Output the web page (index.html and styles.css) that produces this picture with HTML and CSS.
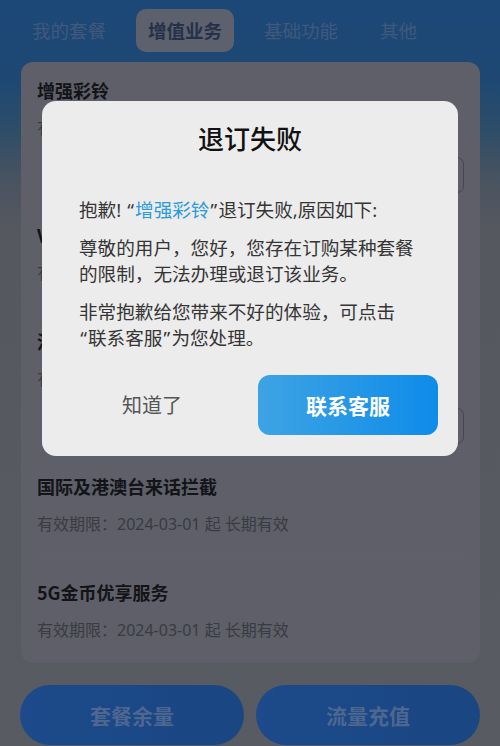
FILE: index.html
```html
<!DOCTYPE html>
<html lang="zh-CN">
<head>
<meta charset="utf-8">
<title>退订失败</title>
<link rel="stylesheet" href="styles.css">
</head>
<body>
<div class="page">
  <nav class="tabs">
    <span class="tab">我的套餐</span>
    <span class="tab active">增值业务</span>
    <span class="tab">基础功能</span>
    <span class="tab">其他</span>
  </nav>

  <section class="card">
    <div class="item has-btn">
      <div class="item-title">增强彩铃</div>
      <div class="item-sub">有效期限：2024-03-01 起 长期有效</div>
      <div class="item-actions"><span class="outline-btn">退订</span></div>
    </div>
    <div class="item">
      <div class="item-title">VoLTE高清语音</div>
      <div class="item-sub">有效期限：2024-03-01 起 长期有效</div>
    </div>
    <div class="item has-btn">
      <div class="item-title">流量封顶提醒</div>
      <div class="item-sub">有效期限：2024-03-01 起 长期有效</div>
      <div class="item-actions"><span class="outline-btn">退订</span></div>
    </div>
    <div class="item">
      <div class="item-title">国际及港澳台来话拦截</div>
      <div class="item-sub">有效期限：2024-03-01 起 长期有效</div>
    </div>
    <div class="item">
      <div class="item-title">5G金币优享服务</div>
      <div class="item-sub">有效期限：2024-03-01 起 长期有效</div>
    </div>
  </section>

  <div class="bottom-bar">
    <span class="pill">套餐余量</span>
    <span class="pill">流量充值</span>
  </div>

  <div class="modal">
    <h2 class="modal-title">退订失败</h2>
    <div class="modal-body">
      <p>抱歉! <span class="q">“</span><span class="hl">增强彩铃</span><span class="q">”</span>退订失败,原因如下:</p>
      <p>尊敬的用户，您好，您存在订购某种套餐<br>的限制，无法办理或退订该业务。</p>
      <p>非常抱歉给您带来不好的体验，可点击<br><span class="q">“</span>联系客服<span class="q">”</span>为您处理。</p>
    </div>
    <div class="modal-actions">
      <span class="btn btn-plain">知道了</span>
      <span class="btn btn-primary">联系客服</span>
    </div>
  </div>
</div>
</body>
</html>
```

FILE: styles.css
```css
* { box-sizing: border-box; }

html, body {
  margin: 0;
  padding: 0;
}

body {
  width: 500px;
  height: 746px;
  overflow: hidden;
  font-family: "Noto Sans", "Noto Sans CJK SC", sans-serif;
  background: #595b62;
}

.page {
  position: relative;
  width: 500px;
  height: 746px;
  background: linear-gradient(180deg, #1c4878 0px, #1e4873 80px, #2e4d68 130px, #495360 180px, #56585f 230px, #595b62 746px);
}

/* tabs */
.tabs {
  display: flex;
  gap: 18px;
  padding: 9px 20px 0;
  height: 52px;
}

.tab {
  padding: 0 12px;
  height: 43px;
  line-height: 43px;
  font-family: "Noto Sans CJK SC", sans-serif;
  font-size: 18.5px;
  color: #41597a;
  border-radius: 10px;
}

.tab.active {
  background: #5c616d;
  color: #25314a;
  font-weight: 700;
}

/* card */
.card {
  margin: 10px 20px 0 21px;
  background: #5e5f68;
  border-radius: 12px;
  padding: 0 16px;
}

.item {
  padding: 22px 0;
  border-bottom: 1px solid #616269;
}

.item:first-child { padding-top: 16px; }
.item:last-child { border-bottom: none; }
.item.has-btn { padding-bottom: 7px; }

.item-title {
  font-family: "Noto Sans CJK SC", sans-serif;
  font-size: 18px;
  line-height: 24px;
  font-weight: 700;
  color: #131418;
}

.item-sub {
  margin-top: 15px;
  font-size: 16px;
  line-height: 22px;
  color: #393b43;
}

.item-actions {
  display: flex;
  justify-content: flex-end;
  margin-top: 18px;
}

.outline-btn {
  width: 80px;
  height: 36px;
  border: 1px solid #45474e;
  border-radius: 7px;
  font-size: 16px;
  line-height: 34px;
  text-align: center;
  color: #393b43;
}

/* bottom */
.bottom-bar {
  display: flex;
  gap: 12px;
  padding: 0 20px;
  margin-top: 22px;
}

.pill {
  flex: 1;
  height: 60px;
  border-radius: 30px;
  background: linear-gradient(90deg, #1c4a8a, #1a4682);
  font-family: "Noto Sans CJK SC", sans-serif;
  font-size: 21px;
  font-weight: 700;
  line-height: 60px;
  text-align: center;
  color: #4e6790;
}

/* modal */
.modal {
  position: absolute;
  left: 42px;
  top: 101px;
  width: 416px;
  background: #ececec;
  border-radius: 14px;
  padding: 19px 0 21px;
}

.modal-title {
  margin: 0;
  font-family: "Noto Sans CJK SC", sans-serif;
  font-size: 26px;
  line-height: 36px;
  font-weight: 500;
  text-align: center;
  color: #111111;
}

.modal-body {
  margin-top: 41px;
  padding: 0 37px;
}

.modal-body p {
  margin: 0 0 12px;
  font-size: 18.6px;
  line-height: 26px;
  color: #353535;
}

.modal-body p:last-child { margin-bottom: 0; }

.q {
  display: inline-block;
  width: 9px;
  text-align: center;
}

.hl { color: #2a9ad8; }

.modal-actions {
  display: flex;
  gap: 16px;
  padding: 0 20px;
  margin-top: 24px;
}

.btn {
  flex: 1;
  height: 60px;
  border-radius: 12px;
  font-family: "Noto Sans CJK SC", sans-serif;
  line-height: 60px;
  text-align: center;
}

.btn-plain {
  font-size: 20px;
  color: #555555;
}

.btn-primary {
  font-size: 21px;
  font-weight: 700;
  color: #ffffff;
  background: linear-gradient(90deg, #3ea3e4, #0e8ce9);
}
```
